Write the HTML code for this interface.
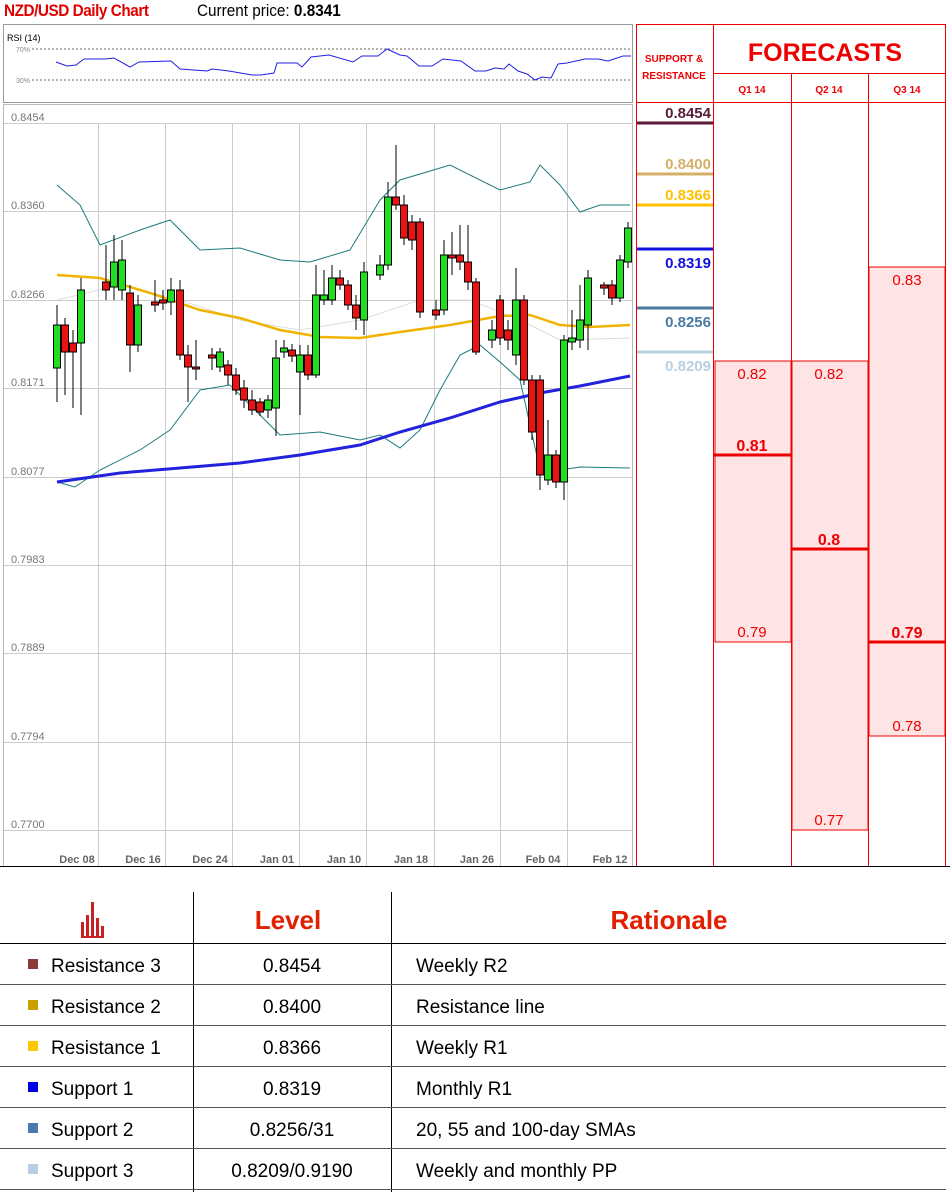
<!DOCTYPE html>
<html><head><meta charset="utf-8"><style>
body{margin:0;width:950px;height:1192px;background:#fff;position:relative;font-family:"Liberation Sans",sans-serif;overflow:hidden}
.a{position:absolute;white-space:nowrap}
.n{font-family:"Liberation Sans Narrow","Liberation Sans",sans-serif}
</style></head><body>
<div class="a" style="left:4px;top:1px;font-size:17px;color:#e00000;font-weight:bold;letter-spacing:-0.5px;transform:scaleX(0.9);transform-origin:left">NZD/USD Daily Chart</div>
<div class="a" style="left:197px;top:1px;font-size:17px;color:#000;transform:scaleX(0.9);transform-origin:left">Current price: <b>0.8341</b></div>

<svg class="a" style="left:0;top:0" width="950" height="1192">
<!-- RSI box -->
<rect x="3.5" y="24.5" width="629" height="78" fill="#fff" stroke="#999"/>
<text x="7" y="41" font-size="9" font-family="Liberation Sans" fill="#000">RSI (14)</text>
<text x="16" y="52" font-size="7" fill="#888">70%</text><text x="16" y="83" font-size="7" fill="#888">30%</text>
<line x1="32" y1="49" x2="631" y2="49" stroke="#666" stroke-dasharray="2,2"/>
<line x1="32" y1="80" x2="631" y2="80" stroke="#666" stroke-dasharray="2,2"/>
<polyline fill="none" stroke="#2020e0" stroke-width="1" points="56,62 67,66 76,65 84,59 105,59 114,58 130,67 139,62 171,61 180,69 207,71 212,69 229,71 252,75 261,75 274,73 277,63 297,63 302,67 311,57 329,55 353,62 362,56 378,56 387,49 400,55 407,56 419,66 432,66 443,59 461,61 475,71 486,71 495,68 504,69 509,64 518,71 527,74 535,80 542,77 551,78 558,64 567,63 585,59 598,59 608,61 623,56 631,56"/>
<!-- chart -->
<rect x="3.5" y="104.5" width="629" height="762" fill="#fff" stroke="#bbb"/>
<g stroke="#ccc" stroke-width="1">
<line x1="4" y1="123.5" x2="632" y2="123.5"/><line x1="4" y1="211.5" x2="632" y2="211.5"/><line x1="4" y1="300.5" x2="632" y2="300.5"/><line x1="4" y1="388.5" x2="632" y2="388.5"/><line x1="4" y1="477.5" x2="632" y2="477.5"/><line x1="4" y1="565.5" x2="632" y2="565.5"/><line x1="4" y1="653.5" x2="632" y2="653.5"/><line x1="4" y1="742.5" x2="632" y2="742.5"/><line x1="4" y1="830.5" x2="632" y2="830.5"/>
<line x1="98.5" y1="123" x2="98.5" y2="866"/><line x1="165.5" y1="123" x2="165.5" y2="866"/><line x1="232.5" y1="123" x2="232.5" y2="866"/><line x1="299.5" y1="123" x2="299.5" y2="866"/><line x1="366.5" y1="123" x2="366.5" y2="866"/><line x1="434.5" y1="123" x2="434.5" y2="866"/><line x1="500.5" y1="123" x2="500.5" y2="866"/><line x1="567.5" y1="123" x2="567.5" y2="866"/>
</g>
<g font-size="11" fill="#777">
<text x="11" y="121">0.8454</text><text x="11" y="209">0.8360</text><text x="11" y="298">0.8266</text><text x="11" y="386">0.8171</text><text x="11" y="475">0.8077</text><text x="11" y="563">0.7983</text><text x="11" y="651">0.7889</text><text x="11" y="740">0.7794</text><text x="11" y="828">0.7700</text>
</g>
<g font-size="11" fill="#666" text-anchor="middle" font-weight="bold">
<text x="77" y="863">Dec 08</text><text x="143" y="863">Dec 16</text><text x="210" y="863">Dec 24</text><text x="277" y="863">Jan 01</text><text x="344" y="863">Jan 10</text><text x="411" y="863">Jan 18</text><text x="477" y="863">Jan 26</text><text x="543" y="863">Feb 04</text><text x="610" y="863">Feb 12</text>
</g>
<line x1="0" y1="866.5" x2="950" y2="866.5" stroke="#000"/>
<!-- indicators -->
<polyline fill="none" stroke="#ddd" points="57,300 120,285 180,300 240,320 300,330 360,320 420,300 470,300 520,320 560,340 630,338"/>
<polyline fill="none" stroke="#1a7a7a" stroke-width="1" points="57,185 80,205 100,245 140,230 170,220 200,250 240,248 280,260 310,262 350,250 380,200 400,180 450,165 500,190 530,182 540,165 560,185 580,212 600,205 630,205"/>
<polyline fill="none" stroke="#1a7a7a" stroke-width="1" points="57,482 75,487 100,470 140,450 170,430 200,390 230,385 260,415 280,435 320,432 360,440 380,435 400,448 420,430 440,390 460,355 480,345 500,362 520,380 540,470 560,470 580,467 630,468"/>
<polyline fill="none" stroke="#f0b400" stroke-width="2.5" points="57,275 100,278 150,293 200,310 240,318 280,330 320,337 360,338 400,332 450,325 500,316 530,315 560,325 590,327 630,325"/>
<polyline fill="none" stroke="#2222dd" stroke-width="3" points="57,482 120,473 180,468 240,463 300,455 360,445 400,432 450,418 500,402 540,393 580,386 630,376"/>
<g id="c" stroke="#000" stroke-width="1"></g>
<!-- right panel -->
<g stroke="#e00" stroke-width="1">
<rect x="715" y="361" width="76" height="281" fill="#ffe4e6" stroke="#e00"/>
<rect x="792" y="361" width="76" height="469" fill="#ffe4e6" stroke="#e00"/>
<rect x="869" y="267" width="76" height="469" fill="#ffe4e6" stroke="#e00"/>
<line x1="636.5" y1="24" x2="636.5" y2="866"/><line x1="713.5" y1="24" x2="713.5" y2="866"/><line x1="791.5" y1="73" x2="791.5" y2="866"/><line x1="868.5" y1="73" x2="868.5" y2="866"/><line x1="945.5" y1="24" x2="945.5" y2="866"/>
<line x1="636" y1="24.5" x2="946" y2="24.5"/><line x1="713" y1="73.5" x2="946" y2="73.5"/><line x1="636" y1="102.5" x2="946" y2="102.5"/>
</g>
<line x1="714" y1="455" x2="791" y2="455" stroke="#e00" stroke-width="3"/>
<line x1="791" y1="549" x2="868" y2="549" stroke="#e00" stroke-width="3"/>
<line x1="868" y1="642" x2="946" y2="642" stroke="#e00" stroke-width="3"/>
<line x1="637" y1="123" x2="713" y2="123" stroke="#5a1a3a" stroke-width="3"/>
<line x1="637" y1="174" x2="713" y2="174" stroke="#d4b06a" stroke-width="3"/>
<line x1="637" y1="205" x2="713" y2="205" stroke="#ffc000" stroke-width="3"/>
<line x1="637" y1="249" x2="713" y2="249" stroke="#1010e0" stroke-width="3"/>
<line x1="637" y1="308" x2="713" y2="308" stroke="#4a7aa0" stroke-width="3"/>
<line x1="637" y1="352" x2="713" y2="352" stroke="#b8d0e0" stroke-width="3"/>
<g font-size="15" font-weight="bold" text-anchor="end" class="n">
<text x="711" y="118" fill="#5a1a3a">0.8454</text><text x="711" y="169" fill="#d4b06a">0.8400</text><text x="711" y="200" fill="#ffc000">0.8366</text><text x="711" y="268" fill="#1010e0">0.8319</text><text x="711" y="327" fill="#4a7aa0">0.8256</text><text x="711" y="371" fill="#b8d0e0">0.8209</text>
</g>
<g fill="#e00" text-anchor="middle">
<text x="674" y="62" font-size="10" font-weight="bold">SUPPORT &amp;</text><text x="674" y="79" font-size="10" font-weight="bold">RESISTANCE</text>
<text x="825" y="61" font-size="25" font-weight="bold">FORECASTS</text>
<text x="752" y="93" font-size="10" font-weight="bold">Q1 14</text><text x="829" y="93" font-size="10" font-weight="bold">Q2 14</text><text x="907" y="93" font-size="10" font-weight="bold">Q3 14</text>
<g font-size="15"><text x="752" y="379">0.82</text><text x="829" y="379">0.82</text><text x="907" y="285">0.83</text><text x="752" y="637">0.79</text><text x="829" y="825">0.77</text><text x="907" y="731">0.78</text></g>
<g font-size="16" font-weight="bold"><text x="752" y="451">0.81</text><text x="829" y="545">0.8</text><text x="907" y="638">0.79</text></g>
</g>
<!-- table -->
<g stroke="#000"><line x1="193.5" y1="892" x2="193.5" y2="1192"/><line x1="391.5" y1="892" x2="391.5" y2="1192"/>
<line x1="0" y1="943.5" x2="946" y2="943.5"/></g>
<g stroke="#555"><line x1="0" y1="984.5" x2="946" y2="984.5"/><line x1="0" y1="1025.5" x2="946" y2="1025.5"/><line x1="0" y1="1066.5" x2="946" y2="1066.5"/><line x1="0" y1="1107.5" x2="946" y2="1107.5"/><line x1="0" y1="1148.5" x2="946" y2="1148.5"/><line x1="0" y1="1189.5" x2="946" y2="1189.5"/></g>
<g fill="#c82020"><rect x="81" y="922" width="3" height="16"/><rect x="86" y="915" width="3" height="23"/><rect x="91" y="902" width="3" height="36"/><rect x="96" y="918" width="3" height="20"/><rect x="101" y="926" width="3" height="12"/><rect x="81" y="936" width="23" height="2"/></g>
<g font-size="26" font-weight="bold" fill="#e02000" text-anchor="middle"><text x="288" y="929">Level</text><text x="669" y="929">Rationale</text></g>
<rect x="28" y="959" width="10" height="10" fill="#8b3a3a"/><rect x="28" y="1000" width="10" height="10" fill="#c8a000"/><rect x="28" y="1041" width="10" height="10" fill="#ffc800"/><rect x="28" y="1082" width="10" height="10" fill="#0000e0"/><rect x="28" y="1123" width="10" height="10" fill="#4a7ab0"/><rect x="28" y="1164" width="10" height="10" fill="#b8cce4"/>
<g font-size="19" fill="#000">
<text x="51" y="972">Resistance 3</text><text x="51" y="1013">Resistance 2</text><text x="51" y="1054">Resistance 1</text><text x="51" y="1095">Support 1</text><text x="51" y="1136">Support 2</text><text x="51" y="1177">Support 3</text>
<g text-anchor="middle"><text x="292" y="972">0.8454</text><text x="292" y="1013">0.8400</text><text x="292" y="1054">0.8366</text><text x="292" y="1095">0.8319</text><text x="292" y="1136">0.8256/31</text><text x="292" y="1177">0.8209/0.9190</text></g>
<text x="416" y="972">Weekly R2</text><text x="416" y="1013">Resistance line</text><text x="416" y="1054">Weekly R1</text><text x="416" y="1095">Monthly R1</text><text x="416" y="1136">20, 55 and 100-day SMAs</text><text x="416" y="1177">Weekly and monthly PP</text>
</g>
</svg>
<script>
var d=[[57,'G',325,368,305,402],[65,'R',325,352,318,395],[73,'R',343,352,330,408],[81,'G',290,343,278,415],[106,'R',282,290,245,300],[114,'G',262,287,235,300],[122,'G',260,290,240,300],[130,'R',293,345,285,372],[138,'G',305,345,295,352],[155,'R',302,305,280,312],[163,'R',300,303,290,310],[171,'G',290,302,278,315],[180,'R',290,355,280,360],[188,'R',355,367,345,402],[196,'R',367,369,340,380],[212,'R',355,358,348,370],[220,'G',352,367,348,372],[228,'R',365,375,360,385],[236,'R',375,390,368,395],[244,'R',388,400,380,408],[252,'R',400,410,390,415],[260,'R',402,412,398,416],[268,'G',400,410,395,418],[276,'G',358,408,340,436],[284,'G',348,352,340,358],[292,'R',350,356,344,362],[300,'G',355,372,345,415],[308,'R',355,375,345,380],[316,'G',295,375,265,378],[324,'G',295,300,270,305],[332,'G',278,300,265,305],[340,'R',278,285,270,290],[348,'R',285,305,280,310],[356,'R',305,318,295,330],[364,'G',272,320,262,335],[380,'G',265,275,255,280],[388,'G',197,265,182,270],[396,'R',197,205,145,210],[404,'R',205,238,195,245],[412,'R',222,240,215,250],[420,'R',222,312,218,318],[436,'R',310,315,300,320],[444,'G',255,310,240,315],[452,'R',255,258,232,275],[460,'R',255,262,225,270],[468,'R',262,282,225,290],[476,'R',282,352,278,355],[492,'G',330,340,320,348],[500,'R',300,338,295,345],[508,'R',330,340,320,350],[516,'G',300,355,268,365],[524,'R',300,380,295,385],[532,'R',380,432,375,440],[540,'R',380,475,375,490],[548,'G',455,480,420,485],[556,'R',455,482,450,488],[564,'G',340,482,335,500],[572,'G',338,342,310,350],[580,'G',320,340,285,348],[588,'G',278,325,270,350],[604,'R',285,288,282,295],[612,'R',285,298,280,305],[620,'G',260,298,255,302],[628,'G',228,262,222,268]];
var s='';d.forEach(function(c){s+='<line x1="'+c[0]+'" y1="'+c[4]+'" x2="'+c[0]+'" y2="'+c[5]+'"/><rect x="'+(c[0]-3.5)+'" y="'+c[2]+'" width="7" height="'+Math.max(2,c[3]-c[2])+'" fill="'+(c[1]=='G'?'#22dd22':'#ee1111')+'"/>';});
document.getElementById('c').innerHTML=s;
</script>
</body></html>
